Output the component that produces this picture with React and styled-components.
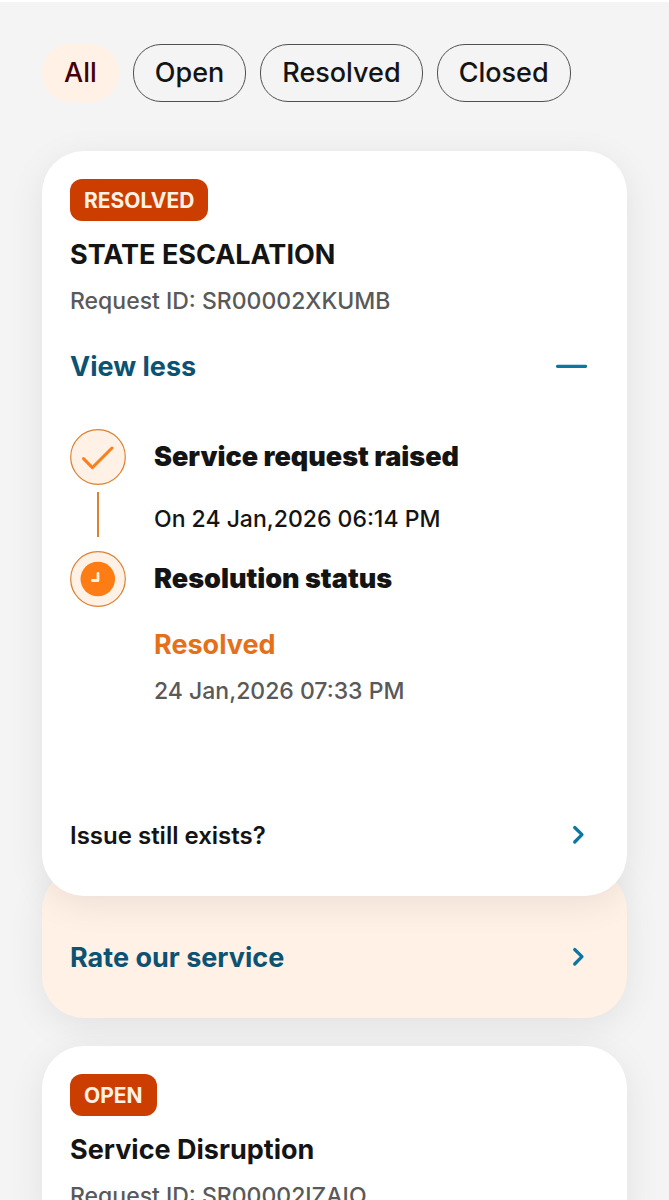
import React, { useState } from "react";
import styled, { createGlobalStyle } from "styled-components";

const GlobalStyle = createGlobalStyle`
  *, *::before, *::after { box-sizing: border-box; }
  body {
    margin: 0;
    background: #f4f4f4;
    color: #141414;
    font-family: Inter, "Liberation Sans", sans-serif;
  }
  h2, h3, p, ol { margin: 0; padding: 0; }
  button {
    margin: 0;
    border: 0;
    background: none;
    font-family: inherit;
    cursor: pointer;
  }
`;

const Page = styled.main`
  border-top: 2px solid #fff;
  padding: 42px 42px 28px;
`;

const Filters = styled.nav`
  display: flex;
  gap: 14px;
  margin-bottom: 49px;
`;

const Chip = styled.button`
  height: 58px;
  padding: 0 21px 2px;
  border: 1px solid ${(p) => (p.$active ? "#fff1e6" : "#505050")};
  border-radius: 28px;
  background: ${(p) => (p.$active ? "#fff1e6" : "transparent")};
  color: ${(p) => (p.$active ? "#440008" : "#141414")};
  font-size: 27px;
  font-weight: 500;
`;

const Stack = styled.div`
  display: flex;
  flex-direction: column;
  gap: 28px;
`;

const Request = styled.article`
  display: flex;
  flex-direction: column;
`;

const Card = styled.section`
  position: relative;
  z-index: 1;
  padding: 28px 40px 28px 28px;
  border-radius: 42px;
  background: #fff;
  box-shadow: 0 8px 36px rgba(0, 0, 0, 0.08);
`;

const RateBar = styled.div`
  margin-top: -28px;
  padding: 56px 40px 28px 28px;
  border-radius: 42px;
  background: #fff1e6;
  box-shadow: 0 8px 36px rgba(0, 0, 0, 0.08);
`;

const Badge = styled.span`
  display: inline-flex;
  align-items: center;
  height: 42px;
  padding: 0 14px;
  border-radius: 12px;
  background: #cc3d00;
  color: #fff1e6;
  font-size: 21px;
  font-weight: 700;
`;

const Title = styled.h2`
  margin-top: 16px;
  font-size: 27px;
  line-height: 36px;
  font-weight: 700;
`;

const Meta = styled.p`
  margin-top: ${(p) => p.$gap}px;
  color: ${(p) => (p.$strong ? "#141414" : "#595959")};
  font-size: 23px;
  line-height: 32px;
  font-weight: 500;
`;

const Action = styled.button`
  display: flex;
  align-items: center;
  justify-content: space-between;
  width: 100%;
  height: 66px;
  margin-top: ${(p) => p.$gap || 0}px;
  padding: 0;
  color: ${(p) => (p.$plain ? "#141414" : "#0c5273")};
  font-size: ${(p) => (p.$plain ? 24 : 27)}px;
  font-weight: ${(p) => (p.$plain ? 600 : 700)};
  text-align: left;
`;

const Timeline = styled.ol`
  margin: 30px 0 95px;
  list-style: none;
`;

const Step = styled.li`
  display: flex;
  gap: 28px;
`;

const Rail = styled.div`
  display: flex;
  flex-direction: column;
  align-items: center;
  flex: none;
  width: 56px;
`;

const Connector = styled.span`
  flex: 1;
  width: 2px;
  margin: 7px 0 14px;
  background: #dd812f;
`;

const StepBody = styled.div`
  padding-bottom: ${(p) => (p.$last ? 0 : 16)}px;
`;

const StepTitle = styled.h3`
  font-size: 27px;
  line-height: 56px;
  font-weight: 900;
`;

const Status = styled.p`
  margin-top: 20px;
  color: #e5701a;
  font-size: 27px;
  line-height: 36px;
  font-weight: 700;
`;

function Minus() {
  return (
    <svg width="32" height="32" viewBox="0 0 32 32" aria-hidden="true">
      <path d="M2.5 16.3H30.5" stroke="#0b76a0" strokeWidth="3.2" strokeLinecap="round" />
    </svg>
  );
}

function Chevron() {
  return (
    <svg width="32" height="32" viewBox="0 0 32 32" fill="none" aria-hidden="true">
      <path
        d="M19.7 8.5L27 15.7L19.7 23"
        stroke="#0b76a0"
        strokeWidth="3.2"
        strokeLinecap="round"
        strokeLinejoin="round"
      />
    </svg>
  );
}

function CheckMark() {
  return (
    <svg width="56" height="56" viewBox="0 0 56 56" fill="none" aria-hidden="true">
      <circle cx="28" cy="28" r="27.3" fill="#fff1e6" stroke="#dd812f" strokeWidth="1.2" />
      <path
        d="M13.5 29.6L22.4 38.6L42 19"
        stroke="#f9801d"
        strokeWidth="3"
        strokeLinecap="round"
        strokeLinejoin="round"
      />
    </svg>
  );
}

function Clock() {
  return (
    <svg width="56" height="56" viewBox="0 0 56 56" fill="none" aria-hidden="true">
      <circle cx="28" cy="28" r="27.3" fill="#fff1e6" stroke="#dd812f" strokeWidth="1.2" />
      <circle cx="27.8" cy="28" r="17.3" fill="#fd7c14" />
      <path
        d="M28 22.5V29.5H22.3"
        stroke="#fff1e6"
        strokeWidth="2.8"
        strokeLinecap="round"
        strokeLinejoin="round"
      />
    </svg>
  );
}

const filters = ["All", "Open", "Resolved", "Closed"];

export default function App() {
  const [active, setActive] = useState("All");
  const [open, setOpen] = useState(true);

  return (
    <>
      <GlobalStyle />
      <Page>
        <Filters>
          {filters.map((name) => (
            <Chip
              key={name}
              type="button"
              $active={name === active}
              aria-pressed={name === active}
              onClick={() => setActive(name)}
            >
              {name}
            </Chip>
          ))}
        </Filters>
        <Stack>
          <Request>
            <Card>
              <Badge>RESOLVED</Badge>
              <Title>STATE ESCALATION</Title>
              <Meta $gap={12}>Request ID: SR00002XKUMB</Meta>
              <Action
                type="button"
                $gap={16}
                aria-expanded={open}
                onClick={() => setOpen(!open)}
              >
                View less
                <Minus />
              </Action>
              {open && (
                <Timeline>
                  <Step>
                    <Rail>
                      <CheckMark />
                      <Connector />
                    </Rail>
                    <StepBody>
                      <StepTitle>Service request raised</StepTitle>
                      <Meta $strong $gap={18}>On 24 Jan,2026 06:14 PM</Meta>
                    </StepBody>
                  </Step>
                  <Step>
                    <Rail>
                      <Clock />
                    </Rail>
                    <StepBody $last>
                      <StepTitle>Resolution status</StepTitle>
                      <Status>Resolved</Status>
                      <Meta $gap={12}>24 Jan,2026 07:33 PM</Meta>
                    </StepBody>
                  </Step>
                </Timeline>
              )}
              <Action type="button" $plain>
                Issue still exists?
                <Chevron />
              </Action>
            </Card>
            <RateBar>
              <Action type="button">
                Rate our service
                <Chevron />
              </Action>
            </RateBar>
          </Request>
          <Card>
            <Badge>OPEN</Badge>
            <Title>Service Disruption</Title>
            <Meta $gap={12}>Request ID: SR00002IZAIO</Meta>
          </Card>
        </Stack>
      </Page>
    </>
  );
}
